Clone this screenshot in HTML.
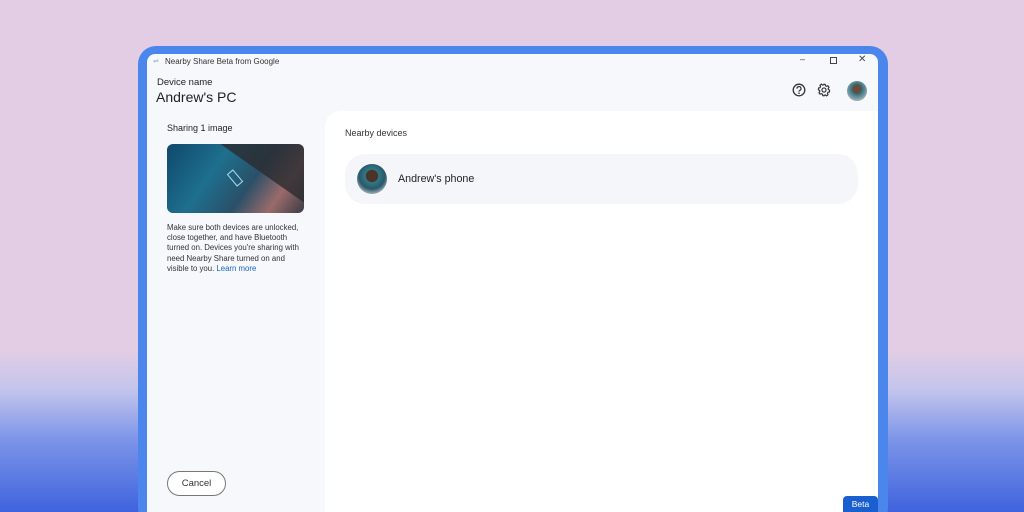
<!DOCTYPE html>
<html><head><style>
*{margin:0;padding:0;box-sizing:border-box}
html,body{width:1024px;height:512px;overflow:hidden}
body{font-family:"Liberation Sans",sans-serif;background:linear-gradient(180deg,#e3cde4 0px,#e2cde4 350px,#c3c4ec 390px,#7c94e8 440px,#3f63de 512px);position:relative}
.frame{position:absolute;left:138px;top:46px;width:750px;height:480px;background:#4a86ec;border-radius:18px}
.win{position:absolute;left:147px;top:54px;width:731px;height:470px;background:#f6f8fc;border-radius:8px 8px 0 0;overflow:hidden}
.t{position:absolute;white-space:nowrap;color:#1f1f1f}
.card{position:absolute;left:178px;top:57px;width:560px;height:420px;background:#fff;border-radius:16px 0 0 0}
</style></head><body>
<div class="frame"></div>
<div class="win">
 <div class="t" style="left:6px;top:3px;font-size:7px;color:#8ab">&#8652;</div>
 <div class="t" style="left:18px;top:3px;font-size:8px;color:#333">Nearby Share Beta from Google</div>
 <div class="t" style="left:653px;top:0px;font-size:9px;color:#444">–</div>
 <div style="position:absolute;left:683px;top:3px;width:7px;height:7px;border:1px solid #444"></div>
 <div class="t" style="left:711px;top:0px;font-size:10px;color:#444">✕</div>
 <div class="t" style="left:10px;top:23px;font-size:9.5px">Device name</div>
 <div class="t" style="left:9px;top:35px;font-size:14px">Andrew's PC</div>
 <svg style="position:absolute;left:645px;top:29px" width="14" height="14" viewBox="0 0 14 14"><circle cx="7" cy="7" r="5.8" fill="none" stroke="#333" stroke-width="1.3"/><path d="M5 5.6a2 2 0 1 1 2.6 1.9c-.5.2-.6.5-.6 1.1" fill="none" stroke="#333" stroke-width="1.2"/><circle cx="7" cy="10.2" r=".8" fill="#333"/></svg>
 <svg style="position:absolute;left:670px;top:29px" width="14" height="14" viewBox="0 0 24 24"><path d="M12 2l2 .3.6 2.5 1.6.9 2.4-.9 2 2.3-1.4 2.1.3 1.8 2.1 1.4-.3 3-2.5.6-.9 1.6.9 2.4-2.3 2-2.1-1.4-1.8.3L12 22l-2-.3-.6-2.5-1.6-.9-2.4.9-2-2.3 1.4-2.1-.3-1.8-2.1-1.4.3-3 2.5-.6.9-1.6-.9-2.4 2.3-2 2.1 1.4 1.8-.3z" fill="none" stroke="#333" stroke-width="2"/><circle cx="12" cy="12" r="3.5" fill="none" stroke="#333" stroke-width="2"/></svg>
 <div style="position:absolute;left:700px;top:27px;width:20px;height:20px;border-radius:50%;background:radial-gradient(circle at 50% 40%,#6b4a3a 0 28%,#2e6c7a 30%,#a8b8c0 80%)"></div>
 <div class="t" style="left:20px;top:69px;font-size:9px">Sharing 1 image</div>
 <div style="position:absolute;left:20px;top:90px;width:137px;height:69px;border-radius:6px;background:linear-gradient(125deg,#10486a 0%,#1e6f8f 35%,#2a5068 60%,#9a6a6a 80%,#3a3c44 100%);overflow:hidden">
  <div style="position:absolute;left:60px;top:-20px;width:120px;height:60px;background:#2a2c30;transform:rotate(35deg);opacity:.8"></div>
  <div style="position:absolute;left:64px;top:26px;width:8px;height:16px;border:1px solid #9fe0f0;transform:rotate(-40deg)"></div>
 </div>
 <div class="t" style="left:20px;top:169px;font-size:7.8px;line-height:10.2px;color:#333">Make sure both devices are unlocked,<br>close together, and have Bluetooth<br>turned on. Devices you're sharing with<br>need Nearby Share turned on and<br>visible to you. <span style="color:#1a62c9">Learn more</span></div>
 <div style="position:absolute;left:20px;top:417px;width:59px;height:25px;border:1px solid #777;border-radius:13px;background:#fff;font-size:9.5px;text-align:center;line-height:23px;color:#333">Cancel</div>
 <div class="card">
  <div class="t" style="left:20px;top:17px;font-size:9px;color:#333">Nearby devices</div>
  <div style="position:absolute;left:20px;top:43px;width:513px;height:50px;background:#f4f6fa;border-radius:20px">
   <div style="position:absolute;left:12px;top:10px;width:30px;height:30px;border-radius:50%;background:radial-gradient(circle at 50% 40%,#4a3428 0 25%,#2f7a8a 28%,#2a5868 55%,#b0bcc4 80%)"></div>
   <div class="t" style="left:53px;top:19px;font-size:10.7px">Andrew's phone</div>
  </div>
 </div>
</div>
<div style="position:absolute;left:843px;top:496px;width:35px;height:16px;background:#1a5fd0;border-radius:4px 4px 0 0;color:#fff;font-size:8.5px;text-align:center;line-height:16px">Beta</div>
</body></html>
